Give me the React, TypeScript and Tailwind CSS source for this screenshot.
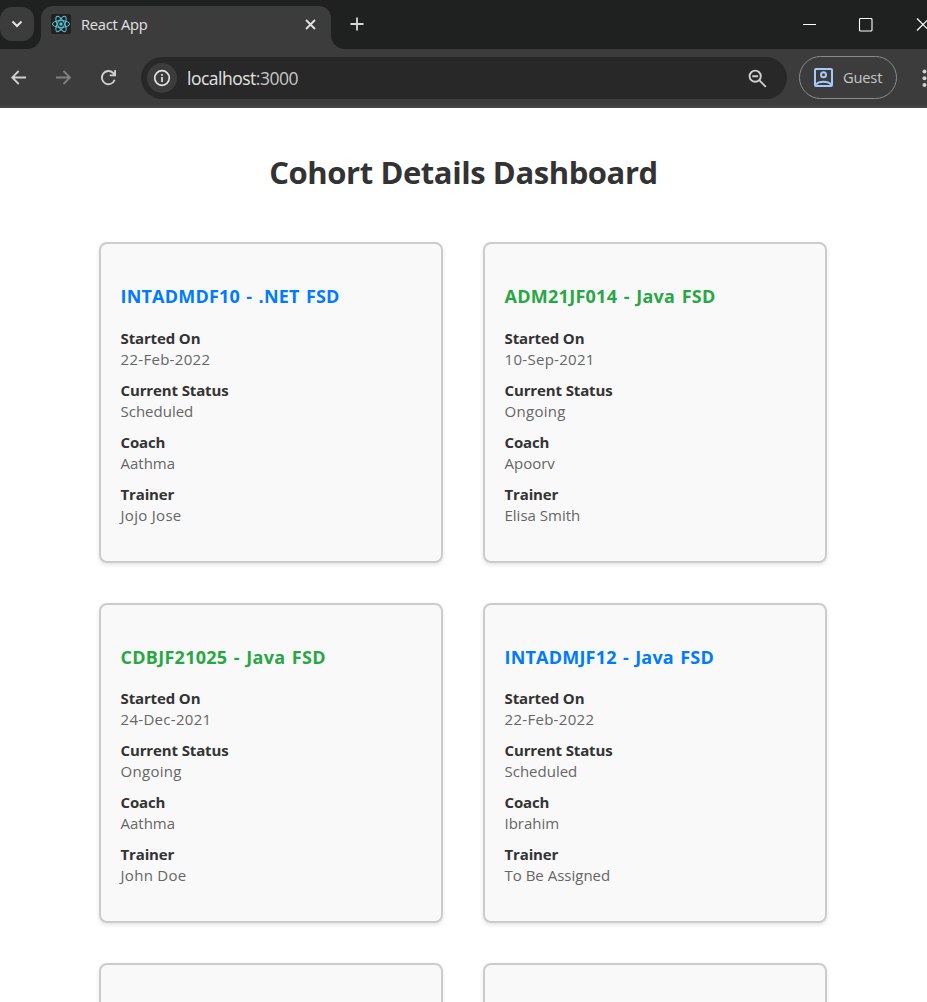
import React from "react";

type Cohort = {
  title: string;
  startedOn: string;
  status: string;
  coach: string;
  trainer: string;
};

const cohorts: Cohort[] = [
  { title: "INTADMDF10 - .NET FSD", startedOn: "22-Feb-2022", status: "Scheduled", coach: "Aathma", trainer: "Jojo Jose" },
  { title: "ADM21JF014 - Java FSD", startedOn: "10-Sep-2021", status: "Ongoing", coach: "Apoorv", trainer: "Elisa Smith" },
  { title: "CDBJF21025 - Java FSD", startedOn: "24-Dec-2021", status: "Ongoing", coach: "Aathma", trainer: "John Doe" },
  { title: "INTADMJF12 - Java FSD", startedOn: "22-Feb-2022", status: "Scheduled", coach: "Ibrahim", trainer: "To Be Assigned" },
];

function Detail({ label, value, wide }: { label: string; value: string; wide?: boolean }) {
  return (
    <div className="mb-[10px] leading-[21px]">
      <dt className="text-[15px] font-bold tracking-[-0.13px] text-[#333]">{label}</dt>
      <dd className={wide ? "text-[15px] tracking-[0.3px] text-[#666]" : "text-[15px] text-[#666]"}>{value}</dd>
    </div>
  );
}

function Card({ cohort }: { cohort?: Cohort }) {
  return (
    <section className="h-[320.5px] w-[344px] rounded-lg border-2 border-[#ccc] bg-[#f9f9f9] pr-5 pl-[19.5px] pt-10 shadow-[0_2px_4px_rgba(0,0,0,0.1)]">
      {cohort && (
        <>
          <h3
            className={
              cohort.status === "Ongoing"
                ? "mb-[18.5px] text-[18px] leading-[25px] font-bold tracking-[0.27px] [word-spacing:1.5px] text-[#28a745]"
                : "mb-[18.5px] text-[18px] leading-[25px] font-bold tracking-[0.2px] [word-spacing:1.4px] text-[#007bff]"
            }
          >
            {cohort.title}
          </h3>
          <dl>
            <Detail label="Started On" value={cohort.startedOn} wide />
            <Detail label="Current Status" value={cohort.status} wide={cohort.status === "Ongoing"} />
            <Detail label="Coach" value={cohort.coach} />
            <Detail label="Trainer" value={cohort.trainer} wide={cohort.trainer.startsWith("J")} />
          </dl>
        </>
      )}
    </section>
  );
}

function ReactLogo() {
  return (
    <svg className="size-5" viewBox="0 0 20 20" fill="none" stroke="#58c4dc" strokeWidth="1">
      <rect width="20" height="20" rx="2" fill="#222" stroke="none" />
      <circle cx="10" cy="10" r="1.7" fill="#58c4dc" stroke="none" />
      <ellipse cx="10" cy="10" rx="8.6" ry="3.4" />
      <ellipse cx="10" cy="10" rx="8.6" ry="3.4" transform="rotate(60 10 10)" />
      <ellipse cx="10" cy="10" rx="8.6" ry="3.4" transform="rotate(120 10 10)" />
    </svg>
  );
}

function TabStrip() {
  return (
    <div className="flex h-[49px] bg-[#1f2120]">
      <div className="relative h-full w-[41px] shrink-0">
        <svg className="absolute bottom-0 left-[27px]" width="14" height="14" viewBox="0 0 14 14">
          <path d="M14 0A14 14 0 0 1 0 14H14Z" fill="#3c3c3c" />
        </svg>
        <div className="mt-[7px] flex h-[34px] w-[34px] items-center justify-center rounded-xl bg-[#3c3c3c]">
          <svg width="12" height="8" viewBox="0 0 12 8" fill="none" stroke="#e3e3e3" strokeWidth="2">
            <path d="M1.5 1.5L6 6L10.5 1.5" />
          </svg>
        </div>
      </div>
      <div className="mt-[6px] flex h-[43px] w-[290px] shrink-0 rounded-t-xl bg-[#3c3c3c] pt-2 pl-[10px]">
        <ReactLogo />
        <span className="ml-[10px] w-[224px] text-[14.7px] leading-[21px] tracking-[-0.25px] text-[#e3e3e3]">React App</span>
        <svg className="mt-[5px]" width="11" height="11" viewBox="0 0 11 11" stroke="#e3e3e3" strokeWidth="1.8">
          <path d="M1 1L10 10M10 1L1 10" />
        </svg>
      </div>
      <div className="relative flex-1">
        <svg className="absolute bottom-0 left-0" width="14" height="14" viewBox="0 0 14 14">
          <path d="M0 0A14 14 0 0 0 14 14H0Z" fill="#3c3c3c" />
        </svg>
        <svg className="mt-[17px] ml-[19px]" width="14" height="14" viewBox="0 0 14 14" stroke="#d8d8d8" strokeWidth="1.8">
          <path d="M7 .5V13.5M.5 7H13.5" />
        </svg>
      </div>
      <div className="flex w-[124px] shrink-0 pt-[18px]">
        <svg width="124" height="14" viewBox="0 0 124 14" fill="none" stroke="#fff" strokeWidth="1">
          <path d="M0 6.5H13" />
          <rect x="56.5" y=".5" width="12.5" height="12.5" rx="1" strokeWidth="1.1" />
          <path d="M114 .5L126 12.5M126 .5L114 12.5" strokeWidth="1.2" />
        </svg>
      </div>
    </div>
  );
}

function Toolbar() {
  return (
    <div className="flex h-[59px] border-b-2 border-[#474747] bg-[#3c3c3c] pt-[8px]">
      <svg className="mt-[12px] ml-[11px] shrink-0" width="108" height="18" viewBox="0 0 108 18" fill="none" strokeWidth="1.8">
        <path d="M15 8.5H1.5M7.7 2L1.2 8.5L7.7 15" stroke="#d0d0d0" />
        <path d="M45 8.5H58.7M52.5 2L59 8.5L52.5 15" stroke="#808080" />
        <path d="M103.7 10.8A6.6 6.6 0 1 1 102.2 4L104 5.8M104.1 1V6.4H98.7" stroke="#d0d0d0" />
      </svg>
      <div className="ml-[22px] flex h-[42px] w-[646px] shrink-0 items-center rounded-full bg-[#282828] pl-[6px]">
        <div className="flex size-[30px] items-center justify-center rounded-full bg-[#3c3c3c]">
          <svg width="18" height="18" viewBox="0 0 18 18" fill="none" stroke="#e3e3e3" strokeWidth="1.7">
            <circle cx="9" cy="9" r="7.3" />
            <path d="M9 8V13M9 5V6.7" />
          </svg>
        </div>
        <span className="ml-[10px] w-[561px] pt-px text-[17.5px] tracking-[-0.5px] text-[#e3e3e3]">
          localhost<span className="text-[#c7c7c7]">:3000</span>
        </span>
        <svg width="19" height="19" viewBox="0 0 19 19" fill="none" stroke="#d0d0d0" strokeWidth="1.9">
          <circle cx="7.2" cy="7.2" r="5.6" />
          <path d="M11.2 11.2L17.8 17.8M4.3 7.2H10.1" />
        </svg>
      </div>
      <div className="-mt-px ml-[12px] flex h-[43px] w-[98px] shrink-0 items-center rounded-full border border-[#8b8b8b] pl-[14px]">
        <svg width="19" height="19" viewBox="0 0 19 19" fill="none" stroke="#a8c7fa" strokeWidth="2">
          <rect x="1" y="1" width="17" height="17" rx="1" />
          <circle cx="9.5" cy="6.8" r="2.5" />
          <path d="M2 16.5C5 12.8 14 12.8 17 16.5" />
        </svg>
        <span className="ml-[10px] text-[14.7px] tracking-[-0.2px] text-[#c7c7c7]">Guest</span>
      </div>
      <svg className="mt-[12px] ml-[25px] shrink-0" width="5" height="20" viewBox="0 0 5 20" fill="#d0d0d0">
        <circle cx="2.5" cy="2.5" r="2" />
        <circle cx="2.5" cy="9.2" r="2" />
        <circle cx="2.5" cy="16" r="2" />
      </svg>
    </div>
  );
}

export default function App() {
  return (
    <div className="h-[1002px] w-[927px] overflow-hidden bg-white font-['Open_Sans',sans-serif]">
      <TabStrip />
      <Toolbar />
      <main className="pt-[43px]">
        <h1 className="text-center text-[31px] leading-[43px] font-bold tracking-[-0.42px] text-[#333]">
          Cohort Details Dashboard
        </h1>
        <div className="mt-12 ml-[99px] grid w-[728px] grid-cols-2 gap-10">
          {cohorts.map((cohort) => (
            <Card key={cohort.title} cohort={cohort} />
          ))}
          <Card />
          <Card />
        </div>
      </main>
    </div>
  );
}
